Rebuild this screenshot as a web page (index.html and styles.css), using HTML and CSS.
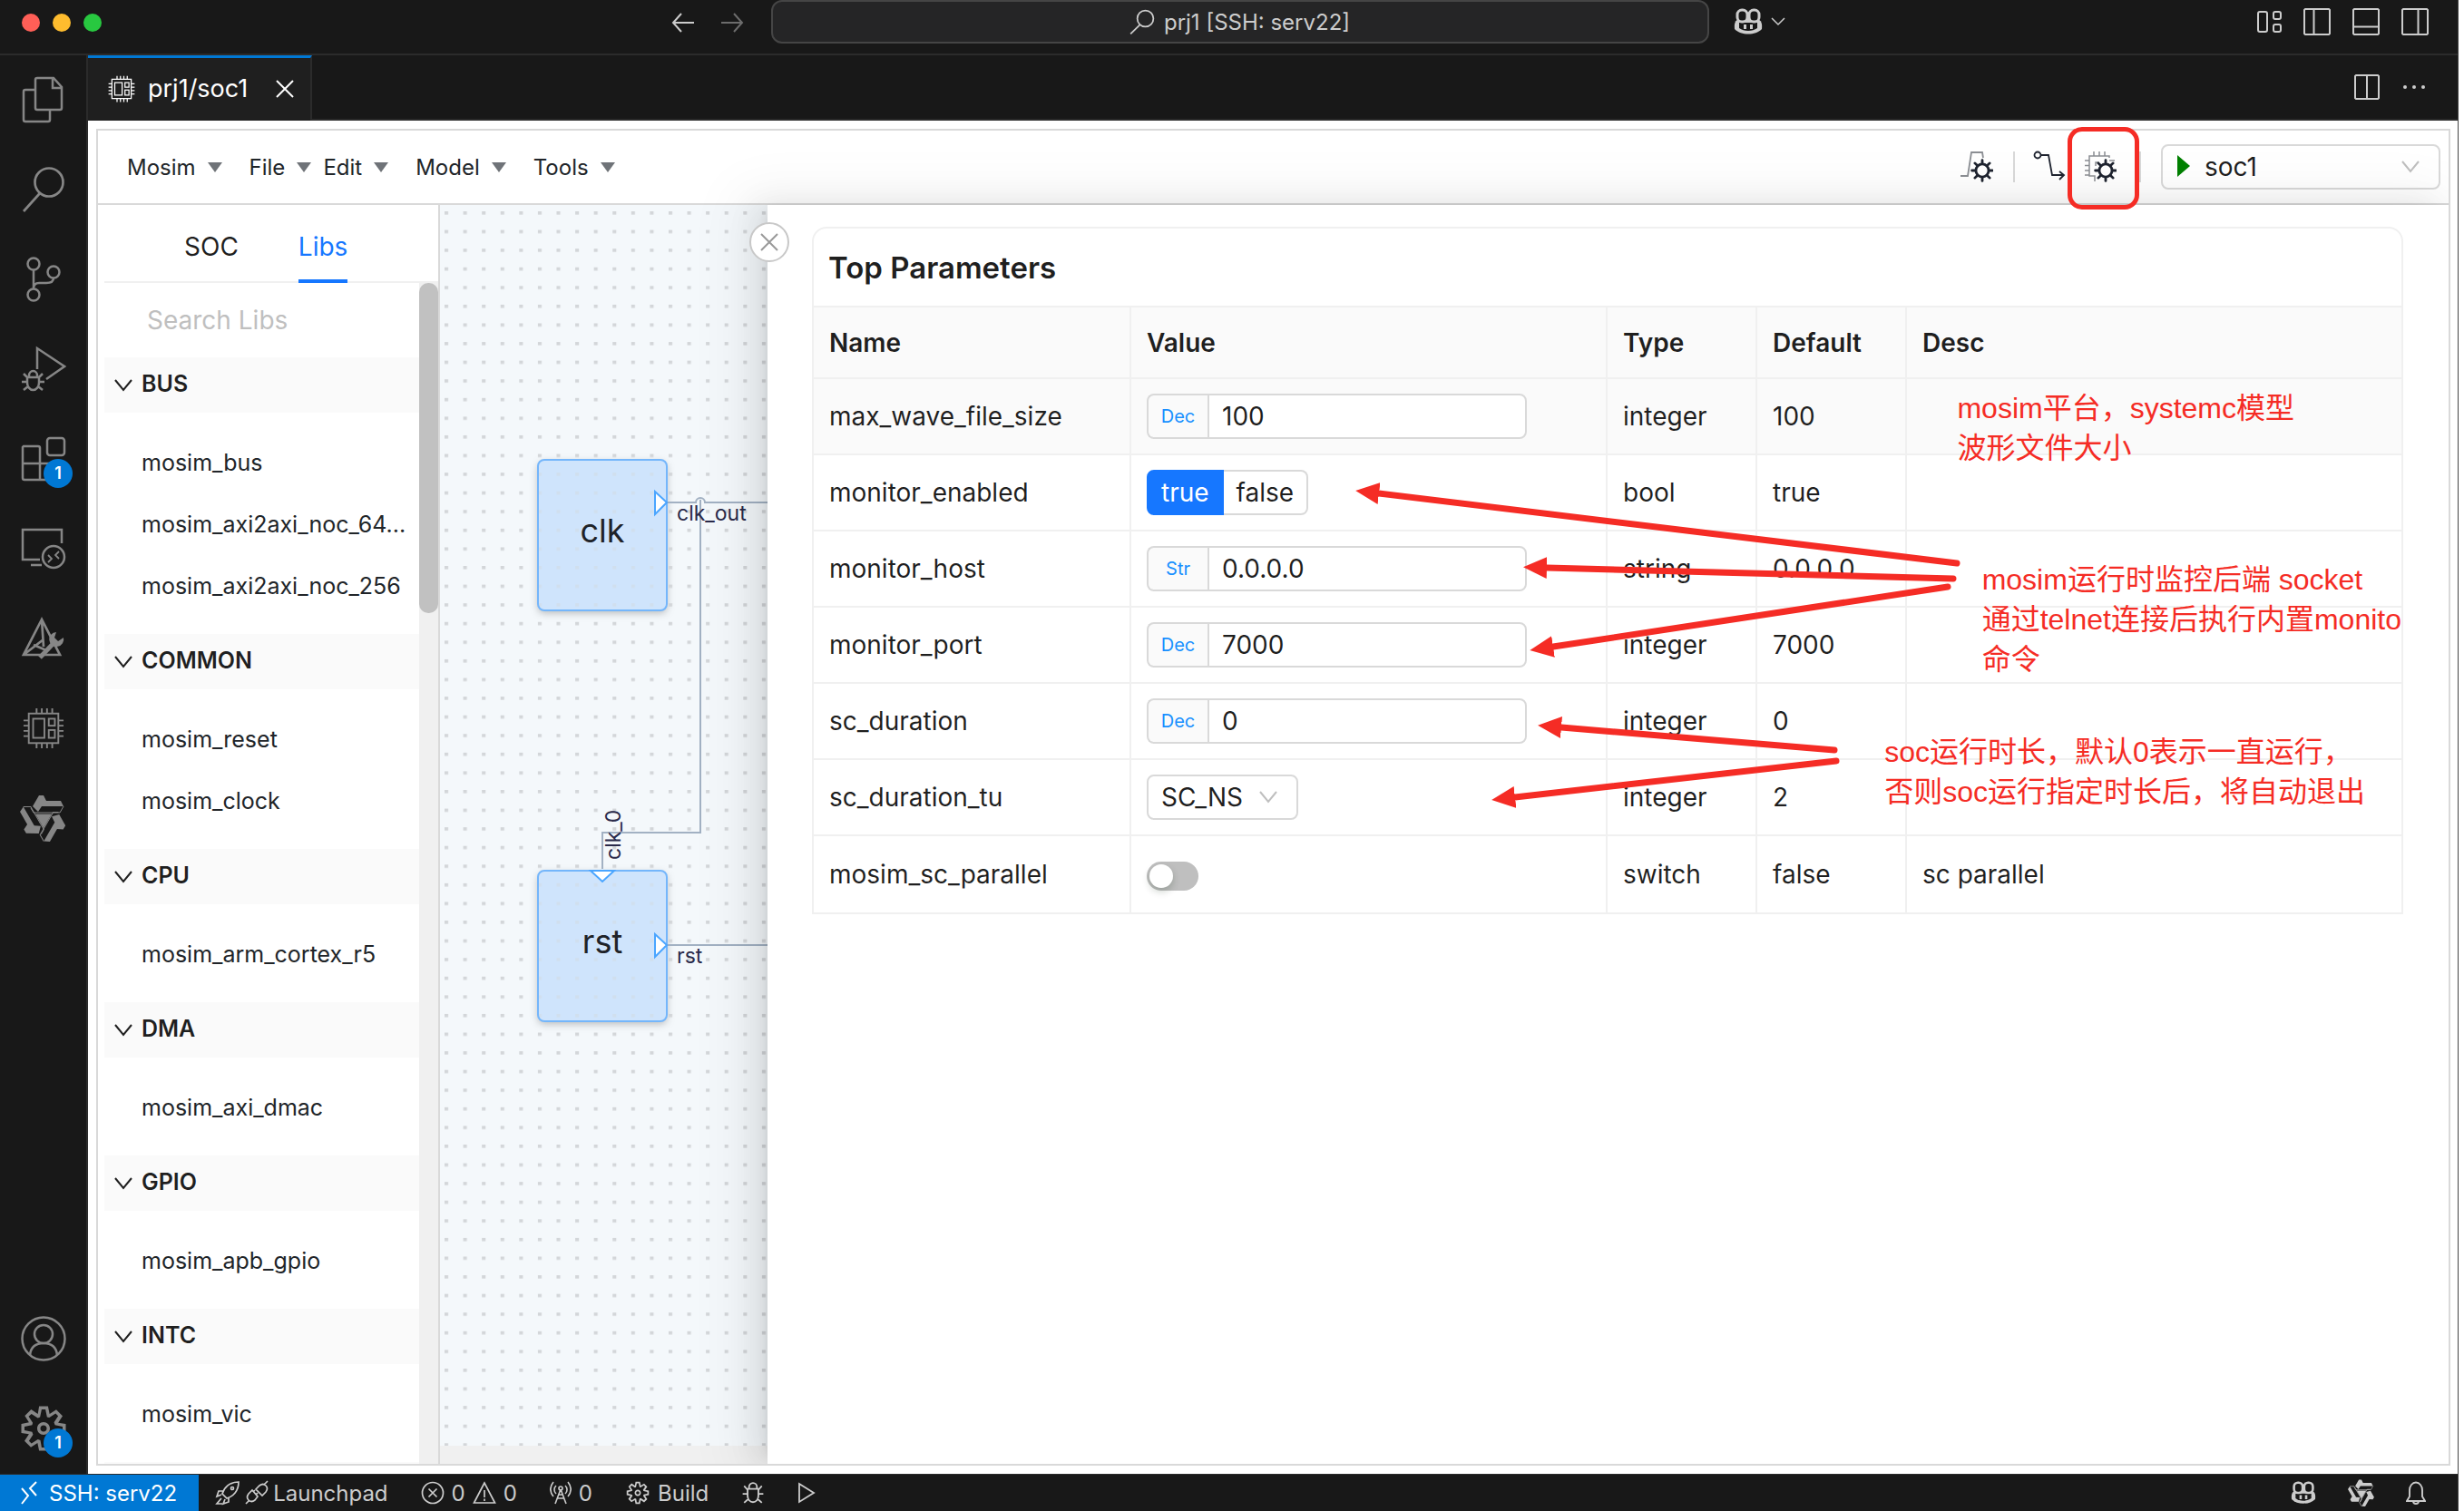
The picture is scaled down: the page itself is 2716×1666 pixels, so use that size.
FILE: index.html
```html
<!DOCTYPE html>
<html lang="zh-CN">
<head>
  <meta charset="UTF-8">
  <meta name="viewport" content="width=device-width, initial-scale=1.0">
  <title>prj1 [SSH: serv22]</title>
  <link rel="stylesheet" href="styles.css">
</head>
<body>
  <!-- shared icons -->
  <svg class="sprite" aria-hidden="true">
    <symbol id="i-search" viewBox="0 0 24 24">
      <g fill="none" stroke="currentColor" stroke-width="1.5"><circle cx="15" cy="9" r="7.6"/><path d="M9.8 14.8 1 23.4"/></g>
    </symbol>
    <symbol id="i-chip" viewBox="0 0 24 24">
      <g fill="none" stroke="currentColor" stroke-width="1"><rect x="3.5" y="3.5" width="17" height="17"/><rect x="6" y="6.500" width="6.500" height="11"/><rect x="15" y="6.500" width="3.500" height="4"/><rect x="15" y="13" width="3.500" height="4.500"/>
      <path d="M8 .5v3M11 .5v3M14 .5v3M17 .5v3M8 20.500v3M11 20.500v3M14 20.500v3M17 20.500v3M.5 7.500h3M.5 10.500h3M.5 13.500h3M.5 16.500h3M20.500 7.500h3M20.500 10.500h3M20.500 13.500h3M20.500 16.500h3"/></g>
    </symbol>
    <symbol id="i-gear" viewBox="0 0 16 16">
      <path fill="currentColor" fill-rule="evenodd" d="M9.1 4.400L8.600 2H7.400l-.5 2.400-.7.300-2-1.300-.9.800 1.300 2-.2.700-2.400.5v1.200l2.400.5.3.800-1.300 2 .8.800 2-1.300.8.300.4 2.300h1.200l.5-2.400.8-.3 2 1.300.8-.8-1.300-2 .3-.8 2.300-.4V7.400l-2.400-.5-.3-.8 1.300-2-.8-.8-2 1.300-.7-.2zM9.400 1l.5 2.400L12 2.100l2 2-1.400 2.100 2.400.4v2.800l-2.400.5L14 12l-2 2-2.100-1.400-.5 2.400H6.600l-.5-2.400L4 13.900l-2-2 1.400-2.100L1 9.400V6.600l2.400-.5L2.100 4l2-2 2.100 1.400.4-2.400h2.800zm.6 7c0 1.100-.9 2-2 2s-2-.9-2-2 .9-2 2-2 2 .9 2 2zM8 9c.6 0 1-.4 1-1s-.4-1-1-1-1 .4-1 1 .4 1 1 1z"/>
    </symbol>
    <symbol id="i-copilot" viewBox="0 0 34 30">
      <path d="M8 12C2 13 1.500 17 2 23c4 4 9 5.500 15 5.500S28 27 32 23c.5-6 0-10-6-11z" fill="currentColor"/>
      <path d="M7 16v6c3 2 6 3 10 3s7-1 10-3v-6z" fill="#181818"/>
      <g fill="#181818" stroke="currentColor" stroke-width="3"><rect x="5" y="2" width="11" height="13" rx="5"/><rect x="18" y="2" width="11" height="13" rx="5"/></g>
      <path d="M13.500 18v5M20.500 18v5" stroke="currentColor" stroke-width="3"/>
    </symbol>
    <symbol id="i-knot" viewBox="-26 -26 52 52">
      <g id="knot-arm" fill="currentColor" stroke="currentColor">
        <path stroke="none" d="M-12-13-5-25H0L3-19H19L22-13H-2L-6-7z"/>
        <path fill="none" d="M22-13 18-6H-11L-14-11"/>
      </g>
      <use href="#knot-arm" transform="rotate(120)"/>
      <use href="#knot-arm" transform="rotate(240)"/>
      <path fill="currentColor" d="M-9-4.500H9L0 11z"/>
    </symbol>
    <symbol id="i-bug" viewBox="0 0 24 24">
      <g fill="none" stroke="currentColor" stroke-width="1.700"><path d="M6.500 8h11v7a5.500 6.500 0 0 1-11 0zM8 8V6a4 4 0 0 1 8 0v2M6.500 13H1.500M22.500 13h-5M6.500 9 3 5M17.500 9 21 5M7.500 18 3 22M16.500 18l4.500 4"/></g>
    </symbol>
    <symbol id="i-chevron" viewBox="0 0 22 16">
      <path d="M2 2l9 11 9-11" fill="none" stroke="currentColor" stroke-width="2"/>
    </symbol>
    <symbol id="i-cog" viewBox="-12 -12 24 24">
      <g fill="none" stroke="currentColor" stroke-width="2.600" stroke-linecap="round"><circle r="6.500"/><path d="M0-7v-3.500M0 7v3.500M7 0h3.500M-7 0h-3.500M5-5l2.500-2.500M-5 5l-2.500 2.500M5 5l2.500 2.500M-5-5l-2.500-2.500"/></g>
    </symbol>
  </svg>

  <div class="app">
    <header class="titlebar">
      <div class="lights"><span class="light red"></span><span class="light yellow"></span><span class="light green"></span></div>
      <div class="nav">
        <button class="icon-btn" aria-label="Go back"><svg width="26" height="22" viewBox="0 0 26 22"><path d="M25 11H2M11 1 2 11l9 10" fill="none" stroke="currentColor" stroke-width="2"/></svg></button>
        <button class="icon-btn dim" aria-label="Go forward"><svg width="26" height="22" viewBox="0 0 26 22"><path d="M1 11h23M15 1l9 10-9 10" fill="none" stroke="currentColor" stroke-width="2"/></svg></button>
      </div>
      <button class="command-center"><svg width="28" height="28"><use href="#i-search"/></svg>prj1 [SSH: serv22]</button>
      <button class="icon-btn copilot" aria-label="Copilot"><svg width="34" height="30"><use href="#i-copilot"/></svg><svg width="16" height="10" viewBox="0 0 16 10"><path d="M1 1l7 7 7-7" fill="none" stroke="currentColor" stroke-width="1.500"/></svg></button>
      <div class="layout-actions">
        <button class="icon-btn" aria-label="Customize layout"><svg width="28" height="30" viewBox="0 0 28 30"><g fill="none" stroke="currentColor" stroke-width="2"><rect x="2" y="4" width="10" height="22" rx="2"/><rect x="19" y="4" width="8" height="8" rx="2"/><rect x="19" y="18" width="8" height="8" rx="2"/></g></svg></button>
        <button class="icon-btn" aria-label="Toggle side bar"><svg width="30" height="30" viewBox="0 0 30 30"><path d="M2 1h26l1 1v26l-1 1H2l-1-1V2zM11.500 1v28" fill="none" stroke="currentColor" stroke-width="2"/></svg></button>
        <button class="icon-btn" aria-label="Toggle panel"><svg width="30" height="30" viewBox="0 0 30 30"><path d="M2 1h26l1 1v26l-1 1H2l-1-1V2zM1 20.500h28" fill="none" stroke="currentColor" stroke-width="2"/></svg></button>
        <button class="icon-btn" aria-label="Toggle secondary side bar"><svg width="30" height="30" viewBox="0 0 30 30"><path d="M2 1h26l1 1v26l-1 1H2l-1-1V2zM18.500 1v28" fill="none" stroke="currentColor" stroke-width="2"/></svg></button>
      </div>
    </header>

    <div class="workbench">
      <nav class="activity" aria-label="Activity bar">
        <button class="activity-item" aria-label="Explorer"><svg width="48" height="52" viewBox="0 0 48 52"><g fill="none" stroke="currentColor" stroke-width="2.500"><path d="M17 2h18l9 10v23a2 2 0 0 1-2 2H17a2 2 0 0 1-2-2V4a2 2 0 0 1 2-2zM34 2v11h10M15 15H4a2 2 0 0 0-2 2v31a2 2 0 0 0 2 2h25a2 2 0 0 0 2-2V37"/></g></svg></button>
        <button class="activity-item" aria-label="Search"><svg width="48" height="50" viewBox="0 0 48 50"><circle cx="30" cy="17" r="15.500" fill="none" stroke="currentColor" stroke-width="2.700"/><path d="M20 29 2 49" stroke="currentColor" stroke-width="2.700"/></svg></button>
        <button class="activity-item" aria-label="Source control"><svg width="40" height="50" viewBox="0 0 40 50"><g fill="none" stroke="currentColor" stroke-width="2.500"><circle cx="9" cy="8" r="6.500"/><circle cx="31" cy="17" r="6.500"/><circle cx="9" cy="42" r="6.500"/><path d="M9 14.500v21M9 35c0-4 2-6 6-6h8c5 0 8-2 8-5.500"/></g></svg></button>
        <button class="activity-item" aria-label="Run and debug"><svg width="50" height="52" viewBox="0 0 50 52"><g fill="none" stroke="currentColor" stroke-width="2.500"><path d="M18 26V3l30 20-20 14"/><path d="M7 35h13v6a6.500 8 0 0 1-13 0zM9 35v-2a4.500 5 0 0 1 9 0v2M7 40H1M26 40h-6M7 35l-4-4M20 35l4-4M8 45l-5 4M19 45l5 4"/></g></svg></button>
        <button class="activity-item" aria-label="Extensions"><svg width="50" height="50" viewBox="0 0 50 50"><g fill="none" stroke="currentColor" stroke-width="2.500"><path d="M3 11h16a2 2 0 0 1 2 2v17h17a2 2 0 0 1 2 2v14a2 2 0 0 1-2 2H4a2 2 0 0 1-2-2V12zM2 30h19v18"/><rect x="29" y="2" width="19" height="19" rx="3"/></g></svg><span class="count">1</span></button>
        <button class="activity-item" aria-label="Remote explorer"><svg width="50" height="46" viewBox="0 0 50 46"><g fill="none" stroke="currentColor" stroke-width="2.500"><path d="M45 17V2H2v33h19M11 41h12"/><circle cx="36" cy="32" r="12"/><path d="M30 30l4 4-4 4M42 26l-4 4 4 4" stroke-width="1.800"/></g></svg></button>
        <button class="activity-item" aria-label="CMake tools"><svg width="50" height="50" viewBox="0 0 50 50"><path d="M23 4 3 43h40zM23 4l2 30M3 43l22-17M14 32l14 6" fill="none" stroke="currentColor" stroke-width="2.700"/><path d="M21 46 39 27" stroke="currentColor" stroke-width="5"/><path d="M47 24a8 8 0 1 1-8-6l-2 6 4 4z" fill="currentColor"/></svg></button>
        <button class="activity-item" aria-label="Mosim"><svg width="46" height="46"><use href="#i-chip"/></svg></button>
        <button class="activity-item" aria-label="Qwen"><svg width="52" height="52"><use href="#i-knot"/></svg></button>
        <span class="activity-gap"></span>
        <button class="activity-item" aria-label="Accounts"><svg width="50" height="50" viewBox="0 0 50 50"><g fill="none" stroke="currentColor" stroke-width="2.500"><circle cx="25" cy="25" r="23.500"/><circle cx="25" cy="20" r="10"/><path d="M10 43c1-9 7-13 15-13s14 4 15 13"/></g></svg></button>
        <button class="activity-item" aria-label="Manage"><svg width="56" height="56"><use href="#i-gear"/></svg><span class="count">1</span></button>
      </nav>

      <div class="editor">
        <div class="tabs">
          <div class="tab">
            <svg width="30" height="30"><use href="#i-chip"/></svg>
            <span class="tab-name">prj1/soc1</span>
            <button class="icon-btn" aria-label="Close tab"><svg width="20" height="20" viewBox="0 0 20 20"><path d="M1 1l18 18M19 1 1 19" stroke="currentColor" stroke-width="2"/></svg></button>
          </div>
          <div class="tab-actions">
            <button class="icon-btn" aria-label="Split editor"><svg width="28" height="28" viewBox="0 0 28 28"><path d="M2 1h24l1 1v24l-1 1H2l-1-1V2zM14 1v26" fill="none" stroke="currentColor" stroke-width="2"/></svg></button>
            <button class="icon-btn" aria-label="More actions"><svg width="28" height="28" viewBox="0 0 28 28"><g fill="currentColor"><circle cx="4" cy="14" r="2"/><circle cx="14" cy="14" r="2"/><circle cx="24" cy="14" r="2"/></g></svg></button>
          </div>
        </div>

        <div class="webview">
          <div class="frame">
            <div class="toolbar">
              <button class="menu">Mosim</button>
              <button class="menu">File</button>
              <button class="menu tight">Edit</button>
              <button class="menu">Model</button>
              <button class="menu">Tools</button>
              <div class="tools">
                <button class="tool" aria-label="Signal settings"><svg width="36" height="36" viewBox="0 0 36 36"><path d="M0 28h8l4-26h12l1 6" fill="none" stroke="#8c8f94" stroke-width="1.800"/><use href="#i-cog" x="11" y="9" width="26" height="26"/></svg></button>
                <span class="split"></span>
                <button class="tool" aria-label="Connect"><svg width="36" height="36" viewBox="0 0 36 36"><g fill="none" stroke="currentColor" stroke-width="1.800"><circle cx="5" cy="5" r="3.500"/><path d="M9 5h8l4 22h12M29 23l5 4-5 5"/></g></svg></button>
                <button class="tool marked" aria-label="Top parameters"><svg width="36" height="36" viewBox="0 0 36 36"><g fill="none" stroke="#8c8f94" stroke-width="1.500"><path d="M28 8V6H6v22h6v6M11 1v5M17 1v5M23 1v5M1 11h5M1 16.500h5M1 22h5M1 27h5M28 11h6M17 13h-4v4"/></g><use href="#i-cog" x="11" y="9" width="26" height="26"/></svg></button>
                <span class="split wide"></span>
                <div class="run-select">
                  <svg class="play" width="14" height="24" viewBox="0 0 14 24"><path d="M0 0l14 12L0 24z" fill="#008000"/></svg>
                  <select aria-label="Run target"><option>soc1</option></select>
                  <svg class="caret" width="22" height="16"><use href="#i-chevron"/></svg>
                </div>
              </div>
            </div>

            <div class="main">
              <aside class="sidebar">
                <div class="side-tabs" role="tablist">
                  <button class="side-tab" role="tab">SOC</button>
                  <button class="side-tab active" role="tab" aria-selected="true">Libs</button>
                </div>
                <div class="side-body">
                  <div class="side-list">
                    <input class="search" type="text" placeholder="Search Libs" aria-label="Search libs">
                    <button class="group"><svg width="22" height="16"><use href="#i-chevron"/></svg>BUS</button>
                    <ul><li>mosim_bus</li><li>mosim_axi2axi_noc_64...</li><li>mosim_axi2axi_noc_256</li></ul>
                    <button class="group"><svg width="22" height="16"><use href="#i-chevron"/></svg>COMMON</button>
                    <ul><li>mosim_reset</li><li>mosim_clock</li></ul>
                    <button class="group"><svg width="22" height="16"><use href="#i-chevron"/></svg>CPU</button>
                    <ul><li>mosim_arm_cortex_r5</li></ul>
                    <button class="group"><svg width="22" height="16"><use href="#i-chevron"/></svg>DMA</button>
                    <ul><li>mosim_axi_dmac</li></ul>
                    <button class="group"><svg width="22" height="16"><use href="#i-chevron"/></svg>GPIO</button>
                    <ul><li>mosim_apb_gpio</li></ul>
                    <button class="group"><svg width="22" height="16"><use href="#i-chevron"/></svg>INTC</button>
                    <ul><li>mosim_vic</li></ul>
                    <div class="group"></div>
                  </div>
                  <div class="scroll"><div class="thumb"></div></div>
                </div>
              </aside>

              <div class="canvas">
                <svg class="diagram">
                  <defs>
                    <pattern id="dots" width="20" height="20" patternUnits="userSpaceOnUse" patternTransform="translate(5 7) scale(1.029)"><rect width="4" height="3.500" fill="#d3d6d9"/></pattern>
                  </defs>
                  <g class="block"><rect x="108" y="281" width="142" height="166" rx="7"/><rect x="108" y="734" width="142" height="166" rx="7"/></g>
                  <rect width="100%" height="100%" fill="url(#dots)"/>
                  <g class="outline"><rect x="108" y="281" width="142" height="166" rx="7"/><rect x="108" y="734" width="142" height="166" rx="7"/></g>
                  <g class="edge"><path d="M250 328h32a5 5 0 0 1 10 0h70M287 325v367H179v40M250 816h112"/></g>
                  <g class="port"><path d="M237 316v25l13-13zM237 804v25l13-13zM166 734h26l-13 12z"/></g>
                  <text class="block-name" x="179" y="372">clk</text>
                  <text class="block-name" x="179" y="825">rst</text>
                  <text class="port-name" x="261" y="348">clk_out</text>
                  <text class="port-name" x="261" y="836">rst</text>
                  <text class="port-name" transform="translate(199 722) rotate(-90)">clk_0</text>
                </svg>
                <div class="canvas-scroll"></div>
              </div>

              <section class="drawer">
                <button class="drawer-close" aria-label="Close"><svg width="20" height="20" viewBox="0 0 20 20"><path d="M1 1l18 18M19 1 1 19" stroke="currentColor" stroke-width="2"/></svg></button>
                <div class="card">
                  <h2>Top Parameters</h2>
                  <table>
                    <thead>
                      <tr><th class="c-name">Name</th><th class="c-value">Value</th><th class="c-small">Type</th><th class="c-small">Default</th><th>Desc</th></tr>
                    </thead>
                    <tbody>
                      <tr class="hover"><td><label for="wave">max_wave_file_size</label></td><td><div class="field"><span class="addon">Dec</span><input id="wave" type="text" value="100"></div></td><td>integer</td><td>100</td><td></td></tr>
                      <tr><td>monitor_enabled</td><td><div class="radios"><label class="on"><input type="radio" name="enabled" checked>true</label><label><input type="radio" name="enabled">false</label></div></td><td>bool</td><td>true</td><td></td></tr>
                      <tr><td><label for="host">monitor_host</label></td><td><div class="field"><span class="addon">Str</span><input id="host" type="text" value="0.0.0.0"></div></td><td>string</td><td>0.0.0.0</td><td></td></tr>
                      <tr><td><label for="port">monitor_port</label></td><td><div class="field"><span class="addon">Dec</span><input id="port" type="text" value="7000"></div></td><td>integer</td><td>7000</td><td></td></tr>
                      <tr><td><label for="dur">sc_duration</label></td><td><div class="field"><span class="addon">Dec</span><input id="dur" type="text" value="0"></div></td><td>integer</td><td>0</td><td></td></tr>
                      <tr><td><label for="unit">sc_duration_tu</label></td><td><div class="unit"><select id="unit"><option>SC_NS</option></select><svg class="caret" width="22" height="16"><use href="#i-chevron"/></svg></div></td><td>integer</td><td>2</td><td></td></tr>
                      <tr><td><label for="par">mosim_sc_parallel</label></td><td><input id="par" class="switch" type="checkbox"></td><td>switch</td><td>false</td><td>sc parallel</td></tr>
                    </tbody>
                  </table>

                  <!-- notes drawn over the table -->
                  <svg class="arrows" aria-hidden="true">
                    <defs><marker id="head" viewBox="0 0 26 24" refX="0" refY="12" markerWidth="26" markerHeight="24" markerUnits="userSpaceOnUse" orient="auto"><path class="head" d="M0 0l26 12L0 24z"/></marker></defs>
                    <g class="shafts">
                      <path d="M1260 369 623 292"/>
                      <path d="M1256 386 808 374"/>
                      <path d="M1250 395 815 461"/>
                      <path d="M1125 575 824 550"/>
                      <path d="M1127 587 773 627"/>
                    </g>
                  </svg>
                  <p class="note note-wave">mosim平台，systemc模型<br>波形文件大小</p>
                  <p class="note note-monitor">mosim运行时监控后端 socket<br>通过telnet连接后执行内置monito<br>命令</p>
                  <p class="note note-duration">soc运行时长，默认0表示一直运行，<br>否则soc运行指定时长后，将自动退出</p>
                </div>
              </section>
            </div>
          </div>
        </div>
      </div>
    </div>

    <footer class="status">
      <button class="status-item remote"><svg width="20" height="26" viewBox="0 0 20 26"><path d="M2 8l7 8-7 9M18 1l-7 7 7 8" fill="none" stroke="currentColor" stroke-width="2"/></svg>SSH: serv22</button>
      <button class="status-item launch"><svg width="28" height="28" viewBox="0 0 28 28"><g fill="none" stroke="currentColor" stroke-width="1.700"><path d="M8 15C10 8 16 2 26 2c0 10-6 16-13 18zM9 12H4l-2 6 5-2M15 19v5l-6 2 2-5M7 20l-5 6h6"/><circle cx="19" cy="9" r="1.500"/></g></svg><svg width="26" height="28" viewBox="0 0 26 28"><g fill="none" stroke="currentColor" stroke-width="1.700"><path d="M12 10l4-4q4-3 7 0t0 7l-4 4zM21 5l4-4M14 18l-3 4q-4 3-7 0t0-7l4-4zM1 26l4-4M12 16l2-2M9 13l2-2"/></g></svg>Launchpad</button>
      <button class="status-item"><svg width="26" height="26" viewBox="0 0 26 26"><g fill="none" stroke="currentColor" stroke-width="1.700"><circle cx="13" cy="13" r="11.500"/><path d="M8.500 8.500l9 9M17.500 8.500l-9 9"/></g></svg>0<svg width="26" height="26" viewBox="0 0 26 26"><path d="M13 2 1.500 24h23zM13 10v8M13 19.500v2.500" fill="none" stroke="currentColor" stroke-width="1.700"/></svg>0</button>
      <button class="status-item"><svg width="24" height="26" viewBox="0 0 24 26"><g fill="none" stroke="currentColor" stroke-width="1.600"><path d="M12 9 6 25M12 9l6 16M8 19h8M9.500 15h5M7 14a6 6 0 0 1 0-9M17 14a6 6 0 0 0 0-9M4 17C0 12 0 6 4 1M20 17c4-5 4-11 0-16"/><circle cx="12" cy="8" r="2"/></g></svg>0</button>
      <button class="status-item"><svg width="28" height="28"><use href="#i-gear"/></svg>Build</button>
      <button class="status-item" aria-label="Debug"><svg width="26" height="26"><use href="#i-bug"/></svg></button>
      <button class="status-item" aria-label="Launch"><svg width="20" height="24" viewBox="0 0 20 24"><path d="M2 2l16 10L2 22z" fill="none" stroke="currentColor" stroke-width="1.800"/></svg></button>
      <div class="status-right">
        <button class="icon-btn" aria-label="Copilot status"><svg width="30" height="26"><use href="#i-copilot"/></svg></button>
        <button class="icon-btn" aria-label="Qwen status"><svg width="30" height="30"><use href="#i-knot"/></svg></button>
        <button class="icon-btn" aria-label="Notifications"><svg width="22" height="28" viewBox="0 0 22 28"><path d="M1 23h20l-3-5v-7a7 8.500 0 0 0-14 0v7zM8 23a3 3 0 0 0 6 0" fill="none" stroke="currentColor" stroke-width="1.900"/></svg></button>
      </div>
    </footer>
  </div>
</body>
</html>
```
FILE: styles.css
```css
* { box-sizing: border-box; }
body {
  margin: 0;
  background: #fff;
  font-family: Inter, "Noto Sans CJK SC", sans-serif;
  font-size: 24px;
}
button, input, select { font: inherit; color: inherit; margin: 0; }
button { background: none; border: none; padding: 0; cursor: pointer; }
svg { display: block; flex: none; }
.sprite { position: absolute; width: 0; height: 0; }
.app {
  display: flex;
  flex-direction: column;
  height: 100vh;
  margin-right: 6px;
  border-right: 1px solid #454545;
  background: #181818;
  color: #ccc;
  overflow: hidden;
}
.icon-btn { display: flex; align-items: center; }
.icon-btn.dim { color: #6c6c6c; }

/* title bar */
.titlebar {
  display: flex;
  align-items: flex-start;
  height: 61px;
  flex: none;
  border-bottom: 2px solid #2b2b2b;
}
.lights { display: flex; gap: 14px; padding: 15px 0 0 24px; }
.light { width: 20px; height: 20px; border-radius: 50%; }
.red { background: #ff5f57; }
.yellow { background: #febc2e; }
.green { background: #28c840; }
.nav { display: flex; gap: 28px; flex: 1; justify-content: flex-end; padding: 14px 30px 0 0; }
.command-center {
  display: flex;
  align-items: center;
  justify-content: center;
  gap: 10px;
  width: 1034px;
  height: 48px;
  border: 2px solid #454545;
  border-radius: 12px;
  background: #252526;
}
.copilot { gap: 8px; padding: 9px 0 0 26px; }
.layout-actions { display: flex; flex: 1; justify-content: flex-end; gap: 24px; padding: 9px 32px 0 2px; }

.workbench { display: flex; flex: 1; min-height: 0; }

/* activity bar */
.activity { display: flex; flex-direction: column; width: 97px; flex: none; border-right: 2px solid #2b2b2b; color: #868686; }
.activity-item {
  position: relative;
  display: flex;
  align-items: center;
  justify-content: center;
  height: 99px;
  padding-bottom: 2px;
  flex: none;
}
.activity-gap { flex: 1; }
.count {
  position: absolute;
  left: 48px;
  top: 49px;
  width: 32px;
  height: 32px;
  border-radius: 50%;
  background: #0078d4;
  color: #fff;
  font-size: 18px;
  font-weight: 600;
  line-height: 32px;
}

/* editor */
.editor { display: flex; flex-direction: column; flex: 1; min-width: 0; }
.tabs { display: flex; justify-content: space-between; height: 72px; flex: none; border-bottom: 2px solid #2b2b2b; }
.tab {
  display: flex;
  align-items: center;
  gap: 14px;
  height: 72px;
  padding: 0 18px 2px 22px;
  border-top: 3px solid #0078d4;
  border-right: 2px solid #2b2b2b;
  background: #1f1f1f;
  color: #fff;
  font-size: 27px;
}
.tab-name { margin-right: 17px; }
.tab-actions { display: flex; gap: 24px; padding-right: 34px; }
.webview { flex: 1; min-height: 0; padding: 9px 8px 9px 9px; background: #fff; color: rgba(0, 0, 0, 0.88); }
.frame { display: flex; flex-direction: column; height: 100%; border: 2px solid #d9d9d9; }

/* toolbar */
.toolbar { display: flex; align-items: center; height: 82px; flex: none; padding: 0 9px 0 2px; border-bottom: 2px solid #d9d9d9; }
.menu { display: flex; align-items: center; gap: 13px; margin-left: 30px; color: #212529; }
.menu.tight { margin-left: 13px; }
.menu::after { content: ""; border: 8px solid transparent; border-top: 11px solid #6f7378; border-bottom: 0; }
.tools { display: flex; align-items: center; margin-left: auto; }
.tool { position: relative; color: #1f2430; margin-left: 20px; }
.split { width: 2px; height: 34px; margin-left: 22px; background: #d9d9d9; }
.split.wide { margin-left: 25px; }
.marked::after {
  content: "";
  position: absolute;
  inset: -26px -25px -29px -18px;
  border: 5px solid #f52c25;
  border-radius: 16px;
  z-index: 3;
}
.run-select, .unit { position: relative; color: rgba(0, 0, 0, 0.88); }
.run-select { width: 308px; margin-left: 22px; }
.play { position: absolute; left: 18px; top: 12px; }
.caret { position: absolute; right: 22px; top: 17px; color: #bfbfbf; pointer-events: none; }
select {
  appearance: none;
  width: 100%;
  height: 50px;
  border: 2px solid #d9d9d9;
  border-radius: 8px;
  background: #fff;
  font-size: 28px;
}
.run-select select { padding-left: 46px; }

/* library list; the clip leaves room for the drawer shadow above */
.main { display: flex; flex: 1; min-height: 0; clip-path: inset(-80px 0 0 0); }
.sidebar { display: flex; flex-direction: column; width: 377px; flex: none; padding-left: 7px; border-right: 2px solid #d9d9d9; }
.side-tabs { display: flex; gap: 66px; height: 86px; flex: none; padding-left: 88px; border-bottom: 2px solid #f0f0f0; }
.side-tab { height: 86px; padding-top: 9px; font-size: 28px; border-bottom: 4px solid transparent; }
.side-tab.active { color: #1677ff; border-color: #1677ff; }
.side-body { display: flex; flex: 1; min-height: 0; }
.side-list { flex: 1; min-width: 0; overflow: hidden; }
.search { width: 100%; height: 82px; padding: 0 47px; border: none; outline: none; font-size: 28px; }
.search::placeholder { color: #bfbfbf; }
.group {
  display: flex;
  align-items: center;
  gap: 9px;
  width: 100%;
  height: 61px;
  padding: 0 10px 4px;
  background: #fafafa;
  font-size: 25px;
  font-weight: 600;
}
.group svg { position: relative; top: 2px; }
ul { list-style: none; margin: 0; padding: 21px 0 19px 41px; }
li { height: 68px; font-size: 25px; line-height: 68px; color: #212529; white-space: nowrap; }
.scroll { width: 21px; background: #f0f0f0; }
.thumb { height: 364px; border-radius: 10px; background: #c1c1c1; }

/* canvas */
.canvas { display: flex; flex-direction: column; width: 361px; flex: none; background: #f4f8fb; }
.diagram { width: 100%; flex: 1; min-height: 0; }
.canvas-scroll { height: 20px; background: #f0f0f0; }
.block { fill: #cfe4fc; filter: drop-shadow(0 3px 4px rgba(0, 0, 0, 0.25)); }
.outline { fill: #cfe4fc; fill-opacity: 0.6; stroke: #74b6fb; stroke-width: 2px; }
.edge { fill: none; stroke: #a2b1c3; stroke-width: 2px; }
.port { fill: #fff; stroke: #4aa5ff; stroke-width: 2px; }
.block-name { font-size: 36px; text-anchor: middle; fill: #1f2329; }
.port-name { font-size: 23px; fill: #2a2a4a; }

/* parameter drawer */
.drawer {
  position: relative;
  flex: 1;
  min-width: 0;
  padding: 24px 50px 24px 49px;
  background: #fff;
  box-shadow: -12px 0 32px rgba(0, 0, 0, 0.08), -6px 0 12px -8px rgba(0, 0, 0, 0.12), -18px 0 56px 16px rgba(0, 0, 0, 0.05);
}
.drawer-close {
  position: absolute;
  left: -20px;
  top: 19px;
  display: flex;
  align-items: center;
  justify-content: center;
  width: 44px;
  height: 44px;
  border: 2px solid #c8c8c8;
  border-radius: 50%;
  background: #fff;
  color: #999;
}
.card { position: relative; border: 2px solid #f0f0f0; border-radius: 16px 16px 0 0; }
h2 { margin: 0; height: 85px; padding-left: 16px; font-size: 33px; font-weight: 600; line-height: 86px; }
table { width: 100%; table-layout: fixed; border-collapse: separate; border-spacing: 0; font-size: 28px; }
th, td { height: 84px; padding: 0 17px; text-align: left; border-right: 2px solid #f0f0f0; border-bottom: 2px solid #f0f0f0; }
th:last-child, td:last-child { border-right: none; }
tbody tr:last-child td { border-bottom: none; }
th { height: 81px; background: #fafafa; border-top: 2px solid #f0f0f0; font-weight: 600; }
.hover td { background: #fafafa; }
.c-name { width: 20%; }
.c-value { width: 30%; }
.c-small { width: 165px; }
.field { display: inline-flex; height: 50px; vertical-align: middle; }
.addon {
  min-width: 67px;
  border: 2px solid #d9d9d9;
  border-right: none;
  border-radius: 8px 0 0 8px;
  background: #fafafa;
  color: #1890ff;
  font-size: 20px;
  line-height: 46px;
  text-align: center;
}
.field input {
  width: 352px;
  padding: 0 14px;
  border: 2px solid #d9d9d9;
  border-radius: 0 8px 8px 0;
  background: #fff;
}
.radios { display: inline-flex; vertical-align: middle; }
.radios label { height: 50px; padding: 0 14px; border: 2px solid #d9d9d9; border-left: none; border-radius: 0 8px 8px 0; line-height: 46px; }
.radios .on { border: 2px solid #1677ff; border-radius: 8px 0 0 8px; background: #1677ff; color: #fff; }
.radios input { position: absolute; opacity: 0; }
.unit { width: 167px; }
.unit select { padding-left: 14px; }
.switch {
  appearance: none;
  display: block;
  width: 57px;
  height: 32px;
  margin-top: 4px;
  border-radius: 16px;
  background: #bfbfbf;
}
.switch::before {
  content: "";
  display: block;
  width: 26px;
  height: 26px;
  margin: 3px;
  border-radius: 50%;
  background: #fff;
  box-shadow: 0 4px 8px rgba(0, 35, 11, 0.2);
}

/* notes */
.arrows { position: absolute; left: 0; top: 0; width: 100%; height: 100%; pointer-events: none; }
.shafts { fill: none; stroke: #f52c25; stroke-width: 7px; stroke-linecap: round; }
.shafts path { marker-end: url(#head); }
.head { fill: #f52c25; stroke: none; }
.note {
  position: absolute;
  margin: 0;
  color: #f52c25;
  font-family: "Liberation Sans", "Noto Sans CJK SC", sans-serif;
  font-size: 32px;
  line-height: 44px;
  white-space: nowrap;
}
.note-wave { right: 118px; top: 176px; }
.note-monitor { right: 0; top: 365px; }
.note-duration { right: 40px; top: 555px; }

/* status bar */
.status { display: flex; align-items: stretch; height: 41px; flex: none; border-top: 1px solid #2b2b2b; }
.status-item { display: flex; align-items: center; gap: 8px; padding: 0 18px; }
.remote { gap: 12px; padding: 0 24px 0 22px; background: #0078d4; color: #fff; }
.launch { gap: 5px; }
.status-right { display: flex; align-items: center; gap: 34px; margin-left: auto; padding-right: 35px; }
```
